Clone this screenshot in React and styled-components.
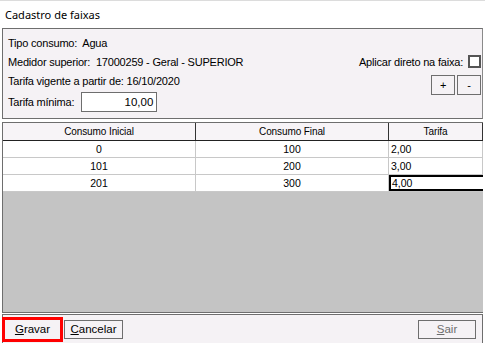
import styled, { createGlobalStyle } from "styled-components";

const Global = createGlobalStyle`
  html, body { margin: 0; padding: 0; background: #ffffff; }
  body { font-family: "Liberation Sans", Arial, sans-serif; }
`;

const Window = styled.div`
  width: 485px;
  height: 343px;
  background: #ffffff;
  display: flex;
  flex-direction: column;
  box-sizing: border-box;
  border-top: 1px solid #dcdcdc;
  overflow: hidden;
`;

const TitleBar = styled.div`
  height: 26px;
  padding-left: 5px;
  display: flex;
  align-items: center;
  font-size: 11px;
  color: #000;
  font-family: "Noto Sans", "Liberation Sans", sans-serif;
`;

const Panel = styled.div`
  margin: 1px 2px 0 2px;
  height: 91px;
  box-sizing: border-box;
  border: 1px solid #6e6e6e;
  border-right-color: #8a8a8a;
  background: #f5f2f5;
  padding: 4px 1px 0 5px;
  display: flex;
  flex-direction: column;
  font-size: 11px;
  letter-spacing: -0.2px;
  color: #000;
`;

const Row = styled.div`
  height: ${({ h }) => h}px;
  display: flex;
  align-items: ${({ top }) => (top ? "flex-start" : "center")};
  justify-content: space-between;
  line-height: 18px;
`;

const Label = styled.span`
  white-space: pre;
`;

const RightGroup = styled.div`
  display: flex;
  align-items: center;
  gap: ${({ gap }) => gap || 0}px;
  margin-top: ${({ mt }) => mt || 0}px;
`;

const CheckBox = styled.span`
  width: 9px;
  height: 9px;
  border: 2px solid #555;
  background: #fff;
  display: inline-block;
  margin: -2px 0 0 5px;
`;

const SmallButton = styled.div`
  width: 24px;
  height: 20px;
  box-sizing: border-box;
  border: 1px solid #6e6e6e;
  background: #f5f2f5;
  display: flex;
  align-items: center;
  justify-content: center;
  font-size: 11px;
`;

const InputBox = styled.div`
  width: 76px;
  height: 20px;
  box-sizing: border-box;
  border: 1px solid #6e6e6e;
  background: #fff;
  margin-left: 7px;
  display: flex;
  align-items: center;
  justify-content: flex-end;
  padding-right: 3px;
  font-size: 11.5px;
  letter-spacing: 0;
`;

const Grid = styled.div`
  margin: 3px 2px 0 2px;
  height: 191px;
  box-sizing: border-box;
  border: 1px solid #6e6e6e;
  border-right: none;
  background: #c4c4c4;
  font-family: "Liberation Sans", Tahoma, sans-serif;
  font-size: 10px;
  color: #000;
`;

const HeadRow = styled.div`
  display: grid;
  grid-template-columns: 193px 193px 1fr;
  height: 17px;
  background: #f7f4f7;
  border-bottom: 1px solid #222;
`;

const HeadCell = styled.div`
  display: flex;
  align-items: center;
  justify-content: center;
  border-right: 1px solid #333;
  letter-spacing: -0.1px;
`;

const BodyRow = styled.div`
  display: grid;
  grid-template-columns: 193px 193px 1fr;
  height: 16px;
  background: #fff;
  border-bottom: 1px solid #c8c8c8;
  font-size: 10.5px;
`;

const Cell = styled.div`
  display: flex;
  align-items: center;
  justify-content: ${({ left }) => (left ? "flex-start" : "center")};
  padding-left: ${({ left }) => (left ? 2 : 0)}px;
  border-right: 1px solid #c8c8c8;
  box-sizing: border-box;
  ${({ focus }) => focus && "border: 2px solid #000; border-right: none; padding-left: 1px;"}
`;

const BottomBar = styled.div`
  margin: 1px 2px 0 2px;
  height: 29px;
  box-sizing: border-box;
  border: 1px solid #6e6e6e;
  border-bottom: none;
  background: #f5f2f5;
  display: flex;
  align-items: center;
  justify-content: space-between;
  padding: 0 6px 0 0;
`;

const Buttons = styled.div`
  display: flex;
  align-items: center;
`;

const Highlight = styled.div`
  border: 3px solid #ff0000;
  margin-left: -1px;
`;

const Button = styled.div`
  width: ${({ w }) => w}px;
  height: 19px;
  box-sizing: border-box;
  border: 1px solid ${({ plain }) => (plain ? "#f5f2f5" : "#6e6e6e")};
  background: #f5f2f5;
  display: flex;
  align-items: center;
  justify-content: center;
  font-size: 11.5px;
  color: ${({ disabled }) => (disabled ? "#6d6d6d" : "#000")};
  margin-left: ${({ ml }) => ml || 0}px;
  u { text-decoration: underline; }
`;

const rows = [
  ["0", "100", "2,00"],
  ["101", "200", "3,00"],
  ["201", "300", "4,00"],
];

export default function App() {
  return (
    <Window>
      <Global />
      <TitleBar>Cadastro de faixas</TitleBar>
      <Panel>
        <Row h={19}>
          <Label>Tipo consumo:  Agua</Label>
        </Row>
        <Row h={20}>
          <Label>Medidor superior:  17000259 - Geral - SUPERIOR</Label>
          <RightGroup>
            <Label>Aplicar direto na faixa:</Label>
            <CheckBox />
          </RightGroup>
        </Row>
        <Row h={19} top>
          <Label>Tarifa vigente a partir de: 16/10/2020</Label>
          <RightGroup gap={2} mt={3}>
            <SmallButton>+</SmallButton>
            <SmallButton>-</SmallButton>
          </RightGroup>
        </Row>
        <Row h={22}>
          <RightGroup>
            <Label>Tarifa mínima:</Label>
            <InputBox>10,00</InputBox>
          </RightGroup>
        </Row>
      </Panel>
      <Grid>
        <HeadRow>
          <HeadCell>Consumo Inicial</HeadCell>
          <HeadCell>Consumo Final</HeadCell>
          <HeadCell>Tarifa</HeadCell>
        </HeadRow>
        {rows.map((r, i) => (
          <BodyRow key={i}>
            <Cell>{r[0]}</Cell>
            <Cell>{r[1]}</Cell>
            <Cell left focus={i === 2}>{r[2]}</Cell>
          </BodyRow>
        ))}
      </Grid>
      <BottomBar>
        <Buttons>
          <Highlight>
            <Button w={55} plain>
              <u>G</u>ravar
            </Button>
          </Highlight>
          <Button w={59} ml={1}>
            <u>C</u>ancelar
          </Button>
        </Buttons>
        <Button w={58} disabled>
          <u>S</u>air
        </Button>
      </BottomBar>
    </Window>
  );
}
